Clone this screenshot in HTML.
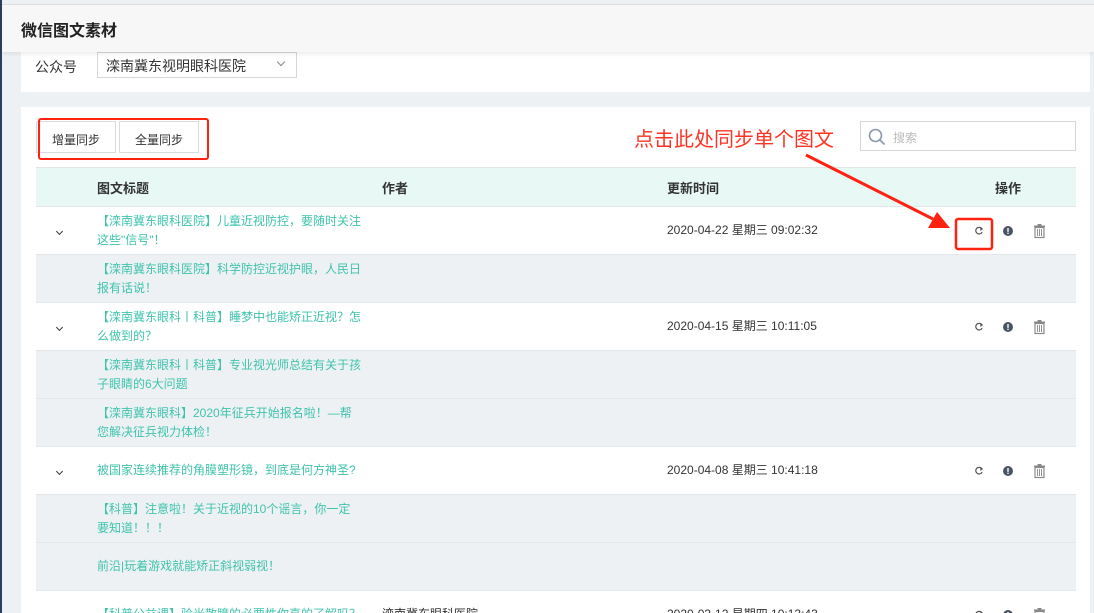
<!DOCTYPE html>
<html><head><meta charset="utf-8">
<style>
*{box-sizing:border-box;margin:0;padding:0}
html,body{width:1094px;height:613px;overflow:hidden}
body{background:#eef1f4;font-family:"Liberation Sans","Noto Sans CJK SC",sans-serif;font-size:12px;color:#333;position:relative}
.lb{position:absolute;left:0;top:0;width:2px;height:613px;background:#2c3e60}
.hd{position:absolute;left:2px;top:4px;width:1092px;height:48px;background:#f7f7f7;border-top:1px solid #ddd;box-shadow:0 2px 4px rgba(0,0,0,.08);font-size:16px;font-weight:bold;color:#222;padding:12px 0 0 19px;z-index:2}
.c1{position:absolute;left:21px;top:52px;width:1069px;height:40px;background:#fff}
.c1 .lab{position:absolute;left:14px;top:5px;font-size:14px;color:#333}
.sel{position:absolute;left:76px;top:0;width:200px;height:26px;border:1px solid #d4d8dd;font-size:14px;padding:3px 0 0 8px;color:#333}
.sel:after{content:"";position:absolute;right:12px;top:6px;width:5px;height:5px;border-right:1px solid #888;border-bottom:1px solid #888;transform:rotate(45deg)}
.c2{position:absolute;left:21px;top:107px;width:1069px;height:506px;background:#fff;overflow:hidden}
.btn{position:absolute;top:14px;height:32px;border:1px solid #d8dcdf;font-size:12px;padding:9px 0 0;text-align:center;color:#333}
.redbox{position:absolute;border:2.5px solid #f21;border-radius:3px}
.srch{position:absolute;left:839px;top:14px;width:216px;height:30px;border:1px solid #d4d8dd;color:#bbb;padding:7px 0 0 32px}
.ann{position:absolute;left:613px;top:16px;font-size:20px;color:#f32;font-family:"Noto Sans CJK SC",sans-serif}
table{position:absolute;left:15px;top:60px;width:1040px;border-collapse:collapse}
th{background:#e8f8f5;height:39px;text-align:left;font-weight:bold;font-size:13px;color:#333;border-top:1px solid #dfe6e4;border-bottom:1px solid #e3e7ea;padding:0}
td{height:48px;border-bottom:1px solid #e3e7ea;vertical-align:middle;line-height:19px;padding:0}
tr.s td{background:#eef1f4}
.t{color:#3ec3ad;width:266px;display:block}
.ar{display:inline-block;width:5px;height:5px;border-right:1.2px solid #333;border-bottom:1.2px solid #333;transform:rotate(45deg);margin-left:21px;margin-top:-4px}
</style></head><body>
<div class="lb"></div>
<div class="hd">微信图文素材</div>
<div class="c1"><span class="lab">公众号</span><div class="sel">滦南冀东视明眼科医院</div></div>
<div class="c2">
 <div class="btn" style="left:15px;width:80px">增量同步</div>
 <div class="btn" style="left:98px;width:80px">全量同步</div>
 <div class="redbox" style="left:17px;top:11px;width:171px;height:42px"></div>
 <div class="ann">点击此处同步单个图文</div>
 <div class="srch"><svg style="position:absolute;left:7px;top:6px" width="18" height="18" viewBox="0 0 18 18"><circle cx="7.5" cy="7.5" r="6" fill="none" stroke="#8a98a8" stroke-width="1.6"/><path d="M12 12l4.5 4.5" stroke="#8a98a8" stroke-width="1.6"/></svg>搜索</div>
 <table>
  <tr><th style="width:61px"></th><th style="width:285px">图文标题</th><th style="width:285px">作者</th><th style="width:300px">更新时间</th><th style="padding-left:28px">操作</th></tr>
  <tr><td><i class="ar"></i></td><td><span class="t">【滦南冀东眼科医院】儿童近视防控，要随时关注这些"信号"！</span></td><td></td><td>2020-04-22 星期三 09:02:32</td><td></td></tr>
  <tr class="s"><td></td><td><span class="t">【滦南冀东眼科医院】科学防控近视护眼，人民日报有话说！</span></td><td></td><td></td><td></td></tr>
  <tr><td><i class="ar"></i></td><td><span class="t">【滦南冀东眼科丨科普】睡梦中也能矫正近视？怎么做到的？</span></td><td></td><td>2020-04-15 星期三 10:11:05</td><td></td></tr>
  <tr class="s"><td></td><td><span class="t">【滦南冀东眼科丨科普】专业视光师总结有关于孩子眼睛的6大问题</span></td><td></td><td></td><td></td></tr>
  <tr class="s"><td></td><td><span class="t">【滦南冀东眼科】2020年征兵开始报名啦！—帮<br>您解决征兵视力体检！</span></td><td></td><td></td><td></td></tr>
  <tr><td><i class="ar"></i></td><td><span class="t">被国家连续推荐的角膜塑形镜，到底是何方神圣?</span></td><td></td><td>2020-04-08 星期三 10:41:18</td><td></td></tr>
  <tr class="s"><td></td><td><span class="t">【科普】注意啦！关于近视的10个谣言，你一定<br>要知道！！！</span></td><td></td><td></td><td></td></tr>
  <tr class="s"><td></td><td><span class="t">前沿|玩着游戏就能矫正斜视弱视！</span></td><td></td><td></td><td></td></tr>
  <tr><td style="vertical-align:top;padding-top:14px"><i class="ar"></i></td><td style="vertical-align:top;padding-top:14px"><span class="t">【科普公益课】验光散瞳的必要性你真的了解吗？</span></td><td style="vertical-align:top;padding-top:14px">滦南冀东眼科医院</td><td style="vertical-align:top;padding-top:14px">2020-03-12 星期四 10:13:43</td><td></td></tr>
 </table>
</div>
<svg width="1094" height="613" style="position:absolute;left:0;top:0;pointer-events:none">
 <defs><g id="acts">
  <path d="M3.8 -2.2A3.3 3.3 0 1 0 4.1 1" fill="none" stroke="#555" stroke-width="1.2"/><path d="M2.3 -3.8L4.4 -2L2.4 -0.6" fill="#555" stroke="#555" stroke-width="0.8"/>
  <circle cx="30" cy="0" r="5" fill="#4a5464"/><rect x="29.3" y="-3" width="1.4" height="3.8" fill="#fff"/><rect x="29.3" y="1.7" width="1.4" height="1.3" fill="#fff"/>
  <rect x="57" y="-3.5" width="9" height="10" fill="none" stroke="#888" stroke-width="1.2"/><rect x="56" y="-5.5" width="11" height="1.5" fill="#888"/><rect x="59.5" y="-7" width="4" height="1.5" fill="#888"/>
  <path d="M59.5 -2v7M61.5 -2v7M63.5 -2v7" stroke="#888" stroke-width="0.9"/>
 </g></defs>
 <use href="#acts" x="978" y="231"/>
 <use href="#acts" x="978" y="327"/>
 <use href="#acts" x="978" y="471"/>
 <use href="#acts" x="978" y="615"/>
 <rect x="956" y="219" width="36" height="30" rx="2" fill="none" stroke="#f21" stroke-width="2.5"/>
 <path d="M806 155L933 219" stroke="#f21" stroke-width="3"/>
 <path d="M950 228L928 228L937 212Z" fill="#f21"/>
</svg>
</body></html>
